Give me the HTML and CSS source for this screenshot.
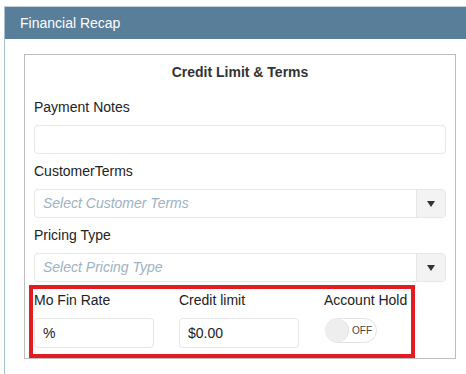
FILE: index.html
```html
<!DOCTYPE html>
<html lang="en">
  <head>
    <meta charset="UTF-8" />
    <meta name="viewport" content="width=device-width, initial-scale=1.0" />
    <title>Financial Recap</title>
    <link rel="stylesheet" href="styles.css">
  </head>

  <body>
    <div class="panel">
      <div class="panel-heading">Financial Recap</div>

      <div class="panel-body">
        <div class="section">
          <h4 class="section-title">Credit Limit &amp; Terms</h4>

          <label class="field-label">Payment Notes</label>
          <input type="text" class="text-input" />

          <label class="field-label">CustomerTerms</label>
          <div class="select-box">
            <span class="placeholder">Select Customer Terms</span>
            <span class="select-arrow"></span>
          </div>

          <label class="field-label">Pricing Type</label>
          <div class="select-box last">
            <span class="placeholder">Select Pricing Type</span>
            <span class="select-arrow"></span>
          </div>

          <div class="highlight-row">
            <div class="col">
              <label class="field-label">Mo Fin Rate</label>
              <input type="text" class="text-input small" value="%" />
            </div>
            <div class="col">
              <label class="field-label">Credit limit</label>
              <input type="text" class="text-input small" value="$0.00" />
            </div>
            <div class="col">
              <label class="field-label">Account Hold</label>
              <div class="toggle">
                <span class="knob"></span>
                <span class="toggle-text">OFF</span>
              </div>
            </div>
          </div>
        </div>
      </div>
    </div>
  </body>
</html>
```

FILE: styles.css
```css
body {
  font-family: "Liberation Sans", Arial, sans-serif;
  margin: 0;
  background-color: #ffffff;
  color: #222;
  font-size: 14px;
  overflow: hidden;
}

.panel {
  margin: 6px 0 0 4px;
  width: 480px;
  height: 367px;
  border-left: 1px solid #a9bfcf;
  border-top: 1px solid #c3d1db;
}

.panel-heading {
  background-color: #587e99;
  color: #ffffff;
  height: 32px;
  line-height: 32px;
  padding-left: 15px;
  font-size: 14px;
}

.panel-body {
  padding: 15px 0 0 19px;
}

.section {
  width: 432px;
  border: 1px solid #bdbdbd;
  padding: 0 0 0 9px;
  box-sizing: border-box;
}

.section-title {
  margin: 7px 0 15px 0;
  line-height: 20px;
  text-align: center;
  font-size: 14px;
  font-weight: bold;
  color: #333;
  padding-right: 9px;
}

.field-label {
  display: block;
  line-height: 20px;
  margin-bottom: 8px;
  color: #222;
}

.text-input {
  display: block;
  width: 412px;
  height: 29px;
  box-sizing: border-box;
  border: 1px solid #e6e6e6;
  border-radius: 4px;
  margin: 0 0 7px 0;
  padding: 0 8px;
  font-family: inherit;
  font-size: 14px;
  color: #222;
  outline: none;
}

.select-box {
  display: flex;
  width: 412px;
  height: 29px;
  box-sizing: border-box;
  border: 1px solid #e6e6e6;
  border-radius: 4px;
  margin-bottom: 7px;
}

.select-box.last {
  margin-bottom: 3px;
}

.placeholder {
  flex: 1;
  line-height: 27px;
  padding-left: 8px;
  font-style: italic;
  color: #9db2c3;
}

.select-arrow {
  width: 28px;
  background-color: #f3f3f3;
  border-left: 1px solid #e6e6e6;
  border-radius: 0 4px 4px 0;
  position: relative;
}

.select-arrow::after {
  content: "";
  position: absolute;
  left: 10px;
  top: 11px;
  border-left: 4px solid transparent;
  border-right: 4px solid transparent;
  border-top: 6px solid #333;
}

.highlight-row {
  display: flex;
  gap: 25px;
  width: 386px;
  margin: 0 0 0 -5px;
  padding: 1px 3px 4px 1px;
  border: 4px solid #e31b23;
  box-sizing: border-box;
}

.col {
  width: 120px;
}

.col:last-child {
  width: auto;
}

.text-input.small {
  width: 120px;
  height: 30px;
  margin-bottom: 2px;
}

.toggle {
  width: 52px;
  height: 25px;
  box-sizing: border-box;
  border: 1px solid #e3e3e3;
  border-radius: 13px;
  margin: 0 0 0 1px;
  display: flex;
  align-items: center;
}

.knob {
  width: 23px;
  height: 23px;
  border-radius: 50%;
  background-color: #eeeeee;
  border-right: 1px solid #e0e0e0;
  box-sizing: border-box;
}

.toggle-text {
  font-size: 10px;
  color: #444;
  margin-left: 3px;
}
```
